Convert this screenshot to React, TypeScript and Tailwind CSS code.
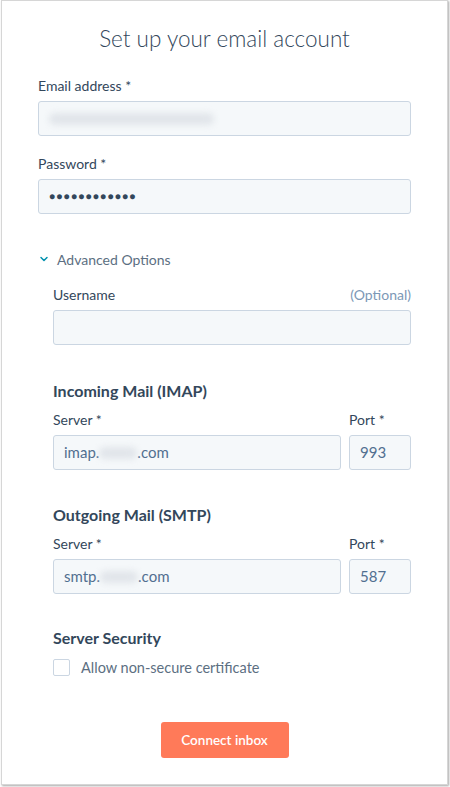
import { ChevronDown } from "lucide-react";

function Label({ text, extra }: { text: string; extra?: string }) {
  return (
    <div className="flex h-5 items-center justify-between text-[14px] leading-5 text-[#33475b]">
      <span>{text}</span>
      {extra && <span className="text-[#7c98b6]">{extra}</span>}
    </div>
  );
}

function Field({ children }: { children?: React.ReactNode }) {
  return (
    <div className="mt-[5px] flex h-[35px] items-center rounded-[3px] border border-[#cbd6e2] bg-[#f5f8fa] px-[10px] text-[15px] text-[#33475b]">
      {children}
    </div>
  );
}

function Blurred({ w }: { w: string }) {
  return <span className={`inline-block h-[12px] rounded-full bg-[#e1e5ea] blur-[3px] ${w}`} />;
}

function ServerRow({ host, port }: { host: string; port: string }) {
  return (
    <div className="mt-[9px] flex gap-2">
      <div className="flex-1">
        <Label text="Server *" />
        <Field>
          <span className="text-[#516f90]">{host}.</span>
          <Blurred w="w-[38px]" />
          <span className="text-[#516f90]">.com</span>
        </Field>
      </div>
      <div className="w-[62px]">
        <Label text="Port *" />
        <Field>
          <span className="text-[#516f90]">{port}</span>
        </Field>
      </div>
    </div>
  );
}

export default function App() {
  return (
    <main className="h-[787px] bg-white font-['Lato',sans-serif]">
      <div className="ml-px h-[785px] w-[447px] border border-[#d6d6d6] bg-white shadow-[1px_1px_2px_rgba(0,0,0,0.35)]">
        <h1 className="pt-[23px] text-center text-[22.5px] font-light leading-[30px] text-[#33475b]">
          Set up your email account
        </h1>

        <section className="px-[36px] pt-[22px]">
          <Label text="Email address *" />
          <Field>
            <Blurred w="w-[165px]" />
          </Field>

          <div className="mt-[18px]">
            <Label text="Password *" />
            <Field>
              <span className="text-[10px] tracking-[1.3px]">●●●●●●●●●●●●</span>
            </Field>
          </div>

          <div className="mt-[35px] flex h-5 items-center gap-[7px] text-[14px] text-[#5c6f82]">
            <ChevronDown size={12} strokeWidth={3} className="text-[#0091ae]" />
            <span>Advanced Options</span>
          </div>

          <div className="pl-[15px]">
            <div className="mt-[16px]">
              <Label text="Username" extra="(Optional)" />
              <Field />
            </div>

            <h2 className="mt-[36px] h-5 text-[16px] font-bold leading-5 text-[#33475b]">
              Incoming Mail (IMAP)
            </h2>
            <ServerRow host="imap" port="993" />

            <h2 className="mt-[35px] h-5 text-[16px] font-bold leading-5 text-[#33475b]">
              Outgoing Mail (SMTP)
            </h2>
            <ServerRow host="smtp" port="587" />

            <h2 className="mt-[34px] h-5 text-[16px] font-bold leading-5 text-[#33475b]">
              Server Security
            </h2>
            <label className="mt-[9px] flex items-center gap-[11px] text-[14.5px] text-[#5c6f82]">
              <span className="h-[17px] w-[17px] rounded-[2px] border border-[#cbd6e2] bg-white" />
              <span>Allow non-secure certificate</span>
            </label>
          </div>

          <div className="mt-[43px] flex justify-center">
            <button className="h-[36px] w-[128px] rounded-[3px] bg-[#ff7a59] text-[13.5px] font-semibold text-white">
              Connect inbox
            </button>
          </div>
        </section>
      </div>
    </main>
  );
}
